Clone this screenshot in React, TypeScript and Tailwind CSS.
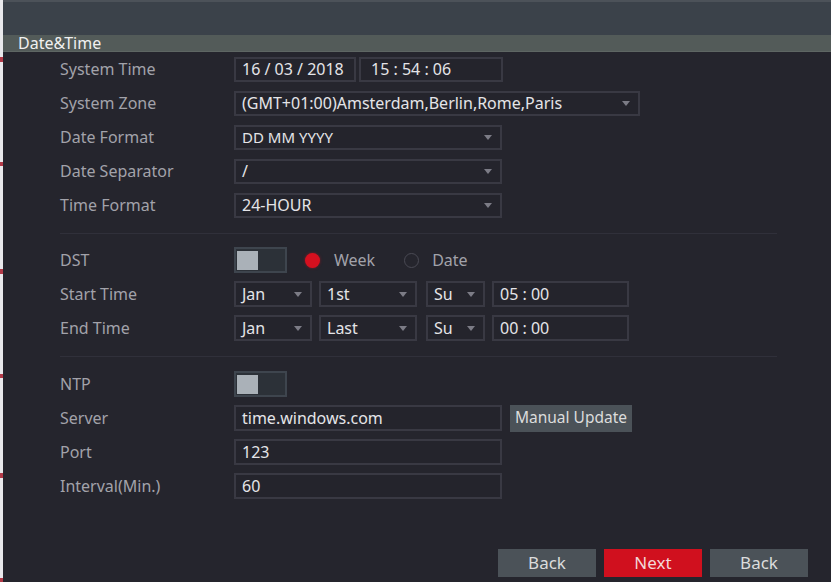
import type { ReactNode } from "react";

const font = { fontFamily: '"Noto Sans", "Open Sans", sans-serif' };

const Arrow = () => (
  <svg width="8" height="5" viewBox="0 0 8 5" className="shrink-0">
    <path d="M0 0 L8 0 L4 5 Z" fill="#7c7c86" />
  </svg>
);

interface FieldProps {
  width: string;
  children?: ReactNode;
  select?: boolean;
  tall?: boolean;
}

const Field = ({ width, children, select, tall }: FieldProps) => (
  <div
    className={`${width} ${tall ? "h-[26px]" : "h-[25px]"} flex items-center justify-between border-2 border-[#393943] bg-[#24242c] pl-[6px] pr-[8px] text-[16px] text-[#e4e4e8]`}>
    <span className="whitespace-nowrap">{children}</span>
    {select && <Arrow />}
  </div>
);

const Row = ({ label, children }: { label: string; children?: ReactNode }) => (
  <div className="flex h-[34px] items-center">
    <div className="w-[174px] shrink-0 text-[16px] text-[#a2a2aa]">{label}</div>
    <div className="flex items-center">{children}</div>
  </div>
);

const Toggle = () => (
  <div className="flex h-[26px] w-[53px] items-center border-2 border-[#3e454e] bg-[#2c3138] pl-[1px]">
    <div className="h-[19px] w-[21px] bg-[#aab1b8]" />
  </div>
);

const Separator = ({ h }: { h: string }) => (
  <div className={`flex ${h} flex-col pt-[11px] pr-[54px]`}>
    <div className="h-px bg-[#30303a]" />
  </div>
);

const GrayButton = ({ children, className = "" }: { children: ReactNode; className?: string }) => (
  <button
    className={`flex items-center justify-center bg-[#4b5258] text-[#dcdcdc] ${className}`}>
    {children}
  </button>
);

const Mark = ({ top }: { top: string }) => (
  <div className={`${top} h-[6px] w-[3px] bg-[#b23a48]`} />
);

export default function App() {
  return (
    <div className="flex h-[582px] w-[831px] overflow-hidden bg-[#25252d]" style={font}>
      {/* left edge of the window behind */}
      <div className="flex w-[3px] shrink-0 flex-col bg-[#e9e9ec]">
        <Mark top="mt-[57px]" />
        <Mark top="mt-[100px]" />
        <Mark top="mt-[103px]" />
        <Mark top="mt-[100px]" />
        <Mark top="mt-[95px]" />
        <Mark top="mt-[100px]" />
      </div>

      <div className="flex flex-1 flex-col">
        <div className="h-[35px] border-t-2 border-[#4c5259] bg-[#3b424a]" />
        <div className="flex h-[17px] items-center border-b border-[#5e6663] bg-[#535b59] pl-[15px] text-[16px] leading-none text-[#f0f0f0]">
          Date&amp;Time
        </div>

        <div className="flex flex-col pl-[57px]">
          <Row label="System Time">
            <Field width="w-[122px]">16 / 03 / 2018</Field>
            <div className="w-[3px]" />
            <Field width="w-[144px]">
              <span className="pl-[4px]">15 : 54 : 06</span>
            </Field>
          </Row>
          <Row label="System Zone">
            <Field width="w-[406px]" select>
              (GMT+01:00)Amsterdam,Berlin,Rome,Paris
            </Field>
          </Row>
          <Row label="Date Format">
            <Field width="w-[268px]" select>
              <span className="text-[15px]">DD MM YYYY</span>
            </Field>
          </Row>
          <Row label="Date Separator">
            <Field width="w-[268px]" select>
              /
            </Field>
          </Row>
          <Row label="Time Format">
            <Field width="w-[268px]" select>
              24-HOUR
            </Field>
          </Row>

          <Separator h="h-[21px]" />

          <Row label="DST">
            <Toggle />
            <div className="ml-[18px] h-[15px] w-[15px] rounded-full bg-[#d5101f] shadow-[0_0_3px_#e0102080]" />
            <span className="ml-[14px] text-[16px] text-[#a2a2aa]">Week</span>
            <div className="ml-[29px] h-[15px] w-[15px] rounded-full border border-[#4a4a54]" />
            <span className="ml-[13px] text-[16px] text-[#a2a2aa]">Date</span>
          </Row>
          <Row label="Start Time">
            <Field width="w-[78px]" select tall>
              Jan
            </Field>
            <div className="w-[7px]" />
            <Field width="w-[98px]" select tall>
              1st
            </Field>
            <div className="w-[9px]" />
            <Field width="w-[59px]" select tall>
              Su
            </Field>
            <div className="w-[7px]" />
            <Field width="w-[137px]" tall>
              05 : 00
            </Field>
          </Row>
          <Row label="End Time">
            <Field width="w-[78px]" select tall>
              Jan
            </Field>
            <div className="w-[7px]" />
            <Field width="w-[98px]" select tall>
              Last
            </Field>
            <div className="w-[9px]" />
            <Field width="w-[59px]" select tall>
              Su
            </Field>
            <div className="w-[7px]" />
            <Field width="w-[137px]" tall>
              00 : 00
            </Field>
          </Row>

          <Separator h="h-[22px]" />

          <Row label="NTP">
            <Toggle />
          </Row>
          <Row label="Server">
            <Field width="w-[268px]" tall>
              time.windows.com
            </Field>
            <GrayButton className="ml-[8px] h-[27px] w-[122px] text-[15.5px]">Manual Update</GrayButton>
          </Row>
          <Row label="Port">
            <Field width="w-[268px]" tall>
              123
            </Field>
          </Row>
          <Row label="Interval(Min.)">
            <Field width="w-[268px]" tall>
              60
            </Field>
          </Row>
        </div>

        <div className="flex-1" />

        <div className="flex justify-end gap-[8px] pr-[23px] pb-[5px]">
          <GrayButton className="h-[28px] w-[98px] text-[17px]">Back</GrayButton>
          <button className="flex h-[28px] w-[98px] items-center justify-center bg-[#d0101e] text-[17px] text-[#f2d6d8]">
            Next
          </button>
          <GrayButton className="h-[28px] w-[98px] text-[17px]">Back</GrayButton>
        </div>
      </div>
    </div>
  );
}
